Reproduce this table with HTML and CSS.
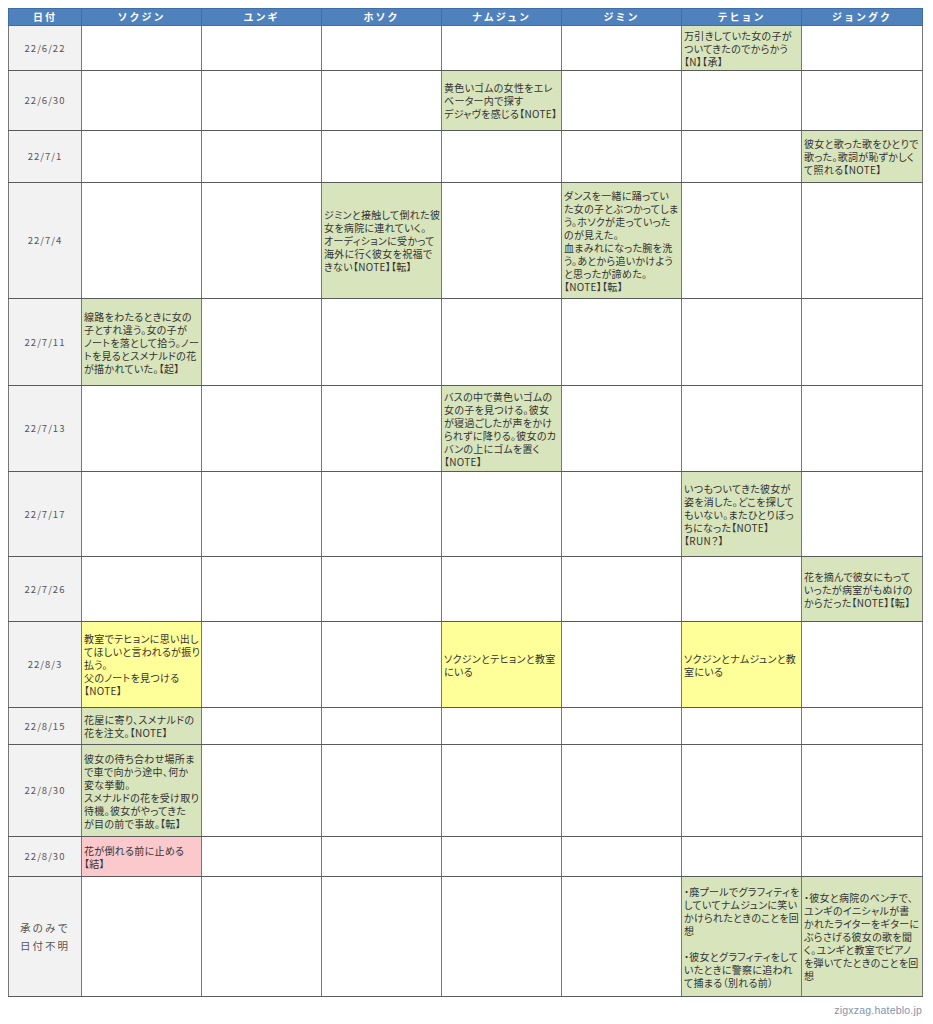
FILE: index.html
```html
<!DOCTYPE html>
<html lang="ja">
<head>
<meta charset="utf-8">
<title>タイムライン</title>
<link rel="stylesheet" href="styles.css">
</head>
<body>
<table class="tl">
<colgroup>
<col class="c-date"><col class="c-m"><col class="c-m"><col class="c-m"><col class="c-m"><col class="c-m"><col class="c-m"><col class="c-last">
</colgroup>
<thead>
<tr class="hd">
<th>日付</th><th>ソクジン</th><th>ユンギ</th><th>ホソク</th><th>ナムジュン</th><th>ジミン</th><th>テヒョン</th><th>ジョングク</th>
</tr>
</thead>
<tbody>
<tr class="r45">
<td class="d">22/6/22</td><td></td><td></td><td></td><td></td><td></td>
<td class="g">万引きしていた女の子が<br>ついてきたのでからかう<br>【N】【承】</td><td></td>
</tr>
<tr class="r60">
<td class="d">22/6/30</td><td></td><td></td><td></td>
<td class="g">黄色いゴムの女性をエレ<br>ベーター内で探す<br>デジャヴを感じる【NOTE】</td><td></td><td></td><td></td>
</tr>
<tr class="r52">
<td class="d">22/7/1</td><td></td><td></td><td></td><td></td><td></td><td></td>
<td class="g">彼女と歌った歌をひとりで<br>歌った。歌詞が恥ずかしく<br>て照れる【NOTE】</td>
</tr>
<tr class="r116">
<td class="d">22/7/4</td><td></td><td></td>
<td class="g">ジミンと接触して倒れた彼<br>女を病院に連れていく。<br>オーディションに受かって<br>海外に行く彼女を祝福で<br>きない【NOTE】【転】</td><td></td>
<td class="g">ダンスを一緒に踊ってい<br>た女の子とぶつかってしま<br>う。ホソクが走っていった<br>のが見えた。<br>血まみれになった腕を洗<br>う。あとから追いかけよう<br>と思ったが諦めた。<br>【NOTE】【転】</td><td></td><td></td>
</tr>
<tr class="r87">
<td class="d">22/7/11</td>
<td class="g">線路をわたるときに女の<br>子とすれ違う。女の子が<br>ノートを落として拾う。ノー<br>トを見るとスメナルドの花<br>が描かれていた。【起】</td><td></td><td></td><td></td><td></td><td></td><td></td>
</tr>
<tr class="r86">
<td class="d">22/7/13</td><td></td><td></td><td></td>
<td class="g">バスの中で黄色いゴムの<br>女の子を見つける。彼女<br>が寝過ごしたが声をかけ<br>られずに降りる。彼女のカ<br>バンの上にゴムを置く<br>【NOTE】</td><td></td><td></td><td></td>
</tr>
<tr class="r85">
<td class="d">22/7/17</td><td></td><td></td><td></td><td></td><td></td>
<td class="g">いつもついてきた彼女が<br>姿を消した。どこを探して<br>もいない。またひとりぼっ<br>ちになった【NOTE】<br>【RUN？】</td><td></td>
</tr>
<tr class="r65">
<td class="d">22/7/26</td><td></td><td></td><td></td><td></td><td></td><td></td>
<td class="g">花を摘んで彼女にもって<br>いったが病室がもぬけの<br>からだった【NOTE】【転】</td>
</tr>
<tr class="r86">
<td class="d">22/8/3</td>
<td class="y">教室でテヒョンに思い出し<br>てほしいと言われるが振り<br>払う。<br>父のノートを見つける<br>【NOTE】</td><td></td><td></td>
<td class="y">ソクジンとテヒョンと教室<br>にいる</td><td></td>
<td class="y">ソクジンとナムジュンと教<br>室にいる</td><td></td>
</tr>
<tr class="r37">
<td class="d">22/8/15</td>
<td class="g">花屋に寄り、スメナルドの<br>花を注文。【NOTE】</td><td></td><td></td><td></td><td></td><td></td><td></td>
</tr>
<tr class="r92">
<td class="d">22/8/30</td>
<td class="g">彼女の待ち合わせ場所ま<br>で車で向かう途中、何か<br>変な挙動。<br>スメナルドの花を受け取り<br>待機。彼女がやってきた<br>が目の前で事故。【転】</td><td></td><td></td><td></td><td></td><td></td><td></td>
</tr>
<tr class="r40">
<td class="d">22/8/30</td>
<td class="p">花が倒れる前に止める<br>【結】</td><td></td><td></td><td></td><td></td><td></td><td></td>
</tr>
<tr class="r120">
<td class="d dl">承のみで<br>日付不明</td><td></td><td></td><td></td><td></td><td></td>
<td class="g">・廃プールでグラフィティを<br>していてナムジュンに笑い<br>かけられたときのことを回<br>想<br><br>・彼女とグラフィティをして<br>いたときに警察に追われ<br>て捕まる（別れる前）</td>
<td class="g">・彼女と病院のベンチで、<br>ユンギのイニシャルが書<br>かれたライターをギターに<br>ぶらさげる彼女の歌を聞<br>く。ユンギと教室でピアノ<br>を弾いてたときのことを回<br>想</td>
</tr>
</tbody>
</table>
<div class="credit">zigxzag.hateblo.jp</div>
</body>
</html>
```
FILE: styles.css
```css
html, body {
  background: #ffffff;
}
body {
  margin: 8px;
  font-family: "Noto Sans CJK JP", "Noto Sans", sans-serif;
}
.tl {
  width: 914px;
  table-layout: fixed;
  border-collapse: collapse;
}
.c-date { width: 73px; }
.c-m { width: 120px; }
.c-last { width: 121px; }

.tl th {
  height: 16px;
  padding: 0;
  background: #4f81bd;
  color: #ffffff;
  font-size: 10px;
  font-weight: 700;
  letter-spacing: 2px;
  line-height: 16px;
  text-align: center;
  border: 1px solid #3f6ea5;
}
.tl td {
  padding: 0 0 0 2px;
  border: 1px solid #5a5a5a;
  border-left-color: #777777;
  border-right-color: #777777;
  vertical-align: middle;
  font-size: 10px;
  line-height: 13px;
  letter-spacing: 0.3px;
  font-feature-settings: "palt" 1;
  color: #333333;
  white-space: nowrap;
  overflow: hidden;
}
.tl td.d {
  padding: 0;
  background: #f2f2f2;
  color: #555555;
  text-align: center;
  font-size: 9.5px;
  letter-spacing: 1px;
  font-feature-settings: normal;
}
.tl td.dl {
  font-size: 10.5px;
  line-height: 18px;
  letter-spacing: 2px;
}
.tl td.g { background: #d8e4bc; }
.tl td.y { background: #ffff99; }
.tl td.p { background: #fbc8cc; }

.r45 td { height: 44px; }
.r60 td { height: 59px; }
.r52 td { height: 51px; }
.r116 td { height: 115px; }
.r87 td { height: 86px; }
.r86 td { height: 85px; }
.r85 td { height: 84px; }
.r65 td { height: 64px; }
.r37 td { height: 36px; }
.r92 td { height: 91px; }
.r40 td { height: 39px; }
.r120 td { height: 119px; }

.credit {
  width: 914px;
  margin-top: 7px;
  text-align: right;
  font-family: "Liberation Sans", Arial, sans-serif;
  font-size: 10.5px;
  color: #7f93ab;
  letter-spacing: 0.2px;
}
```
